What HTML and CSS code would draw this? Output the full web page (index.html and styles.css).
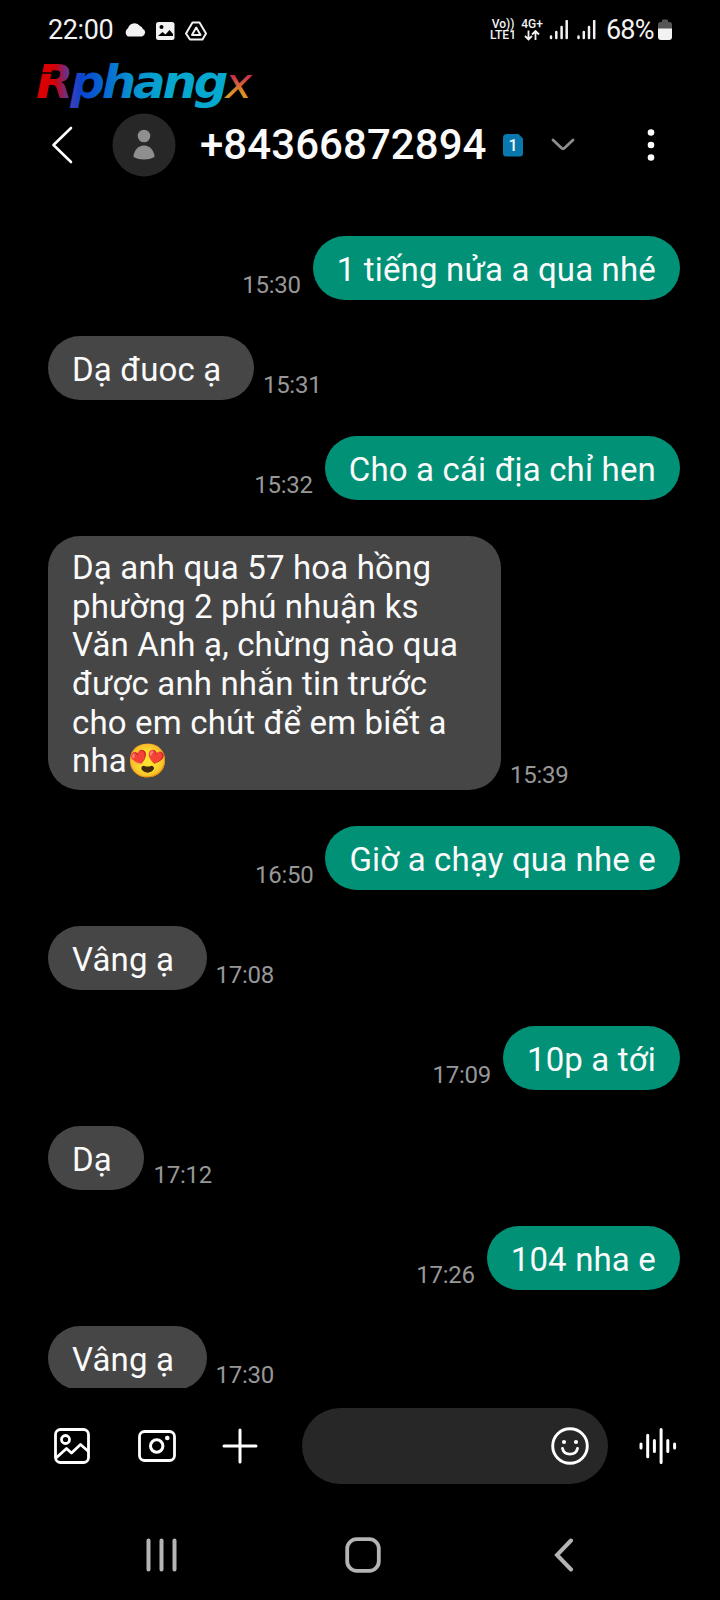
FILE: index.html
```html
<!DOCTYPE html>
<html lang="vi">
<head>
<meta charset="utf-8">
<title>+84366872894</title>
<link rel="stylesheet" href="styles.css">
</head>
<body>
<div class="phone">
  <div class="status">
    <span class="clock">22:00</span>
    <svg class="status-left" width="86" height="24" viewBox="0 0 86 24">
      <path fill="#f2f2f2" d="M5 18.500a4.800 4.800 0 0 1 0-8.200 6.800 6.800 0 0 1 12-2.300 4.500 4.500 0 0 1 2.800 2.700 4.200 4.200 0 0 1-.8 7.800z"/>
      <rect x="33" y="4" width="18.500" height="18" rx="2.500" fill="#f2f2f2"/>
      <circle cx="38.500" cy="9" r="2" fill="#000"/>
      <path d="M35 18l4.500-4 3 2.500 4-4.500 3.500 4v2H35z" fill="#000"/>
      <path d="M69.500 4.500h7l6.500 11-3.500 6H67l-4-6z" fill="none" stroke="#f2f2f2" stroke-width="2" stroke-linejoin="round"/>
      <path d="M73.200 9.500l4.300 7.500H69z" fill="none" stroke="#f2f2f2" stroke-width="2" stroke-linejoin="round"/>
    </svg>
    <div class="tiny volte"><span>Vo))</span><span>LTE1</span></div>
    <div class="tiny net"><span>4G+</span>
      <svg width="16" height="11" viewBox="0 0 16 11"><path d="M4.500 .5v9M1 6l3.500 3.500L8 6M11.500 10V1M8 4.500L11.500 1 15 4.500" fill="none" stroke="#f2f2f2" stroke-width="1.800"/></svg>
    </div>
    <svg class="signal" width="48" height="20" viewBox="0 0 48 20"><path d="M2 16.500V18M7.300 12V18M12.600 7V18M17.700 1V18M29.500 16.500V18M34.800 12V18M40 7V18M45.200 1V18" stroke="#f2f2f2" stroke-width="2.500" stroke-linecap="round"/></svg>
    <span class="percent">68%</span>
    <svg class="battery" width="14" height="22" viewBox="0 0 14 22"><path d="M4 1.500Q4 .5 5 .5h4q1 0 1 1V3h1.500Q14 3 14 5.500V10H0V5.500Q0 3 2.500 3H4z" fill="#555"/><path d="M0 9.500h14V18q0 3-3 3H3q-3 0-3-3z" fill="#f2f2f2"/></svg>
  </div>

  <svg class="logo" width="220" height="50" viewBox="0 0 220 50">
    <defs>
      <linearGradient id="brand" gradientUnits="userSpaceOnUse" x1="0" y1="0" x2="190" y2="0">
        <stop offset="0" stop-color="#e00000"/><stop offset=".1" stop-color="#d20008"/><stop offset=".18" stop-color="#493db0"/><stop offset=".24" stop-color="#0846d0"/><stop offset=".5" stop-color="#0790cf"/><stop offset=".7" stop-color="#06a8cf"/><stop offset="1" stop-color="#06a8cf"/>
      </linearGradient>
      <linearGradient id="warm" gradientUnits="userSpaceOnUse" x1="0" y1="12" x2="0" y2="38"><stop offset=".1" stop-color="#c62852"/><stop offset=".8" stop-color="#dc9424"/></linearGradient>
    </defs>
    <text class="logo-text" x="0" y="38" textLength="213" lengthAdjust="spacingAndGlyphs" fill="url(#brand)">Rphang<tspan class="logo-x" fill="url(#warm)">x</tspan></text>
    <path d="M4 13h13" stroke="#000" stroke-width="1.500"/>
  </svg>

  <header class="header">
    <svg class="back" width="22" height="38" viewBox="0 0 22 38"><path d="M20 2L2.500 19 20 36" fill="none" stroke="#fff" stroke-width="2.600" stroke-linecap="round" stroke-linejoin="round"/></svg>
    <svg class="avatar" width="64" height="64" viewBox="0 0 64 64"><circle cx="32" cy="32" r="31.500" fill="#272727"/><circle cx="32" cy="23" r="6.300" fill="#8f8f8f"/><path d="M21.500 44c0-6 4.500-11.500 10.500-11.500S42.500 38 42.500 44q-4.500 2.500-10.500 2.500T21.500 44z" fill="#8f8f8f"/></svg>
    <h1 class="number">+84366872894</h1>
    <span class="sim">1</span>
    <svg class="chevron" width="26" height="16" viewBox="0 0 26 16"><path d="M3 3l8.500 8q1.500 1.400 3 0L23 3" fill="none" stroke="#8d8d8d" stroke-width="2.800" stroke-linecap="round" stroke-linejoin="round"/></svg>
    <svg class="more" width="8" height="34" viewBox="0 0 8 34"><g fill="#fff"><circle cx="4" cy="4.500" r="3.300"/><circle cx="4" cy="17" r="3.300"/><circle cx="4" cy="29.500" r="3.300"/></g></svg>
  </header>

  <main class="thread">
    <div class="row sent"><p class="bubble">1 tiếng nửa a qua nhé</p><time>15:30</time></div>
    <div class="row"><p class="bubble">Dạ đuoc ạ</p><time>15:31</time></div>
    <div class="row sent"><p class="bubble">Cho a cái địa chỉ hen</p><time>15:32</time></div>
    <div class="row"><p class="bubble long">Dạ anh qua 57 hoa hồng<br>phường 2 phú nhuận ks<br>Văn Anh ạ, chừng nào qua<br>được anh nhắn tin trước<br>cho em chút để em biết a<br>nha<span class="emoji">😍</span></p><time>15:39</time></div>
    <div class="row sent"><p class="bubble">Giờ a chạy qua nhe e</p><time>16:50</time></div>
    <div class="row"><p class="bubble">Vâng ạ</p><time>17:08</time></div>
    <div class="row sent"><p class="bubble">10p a tới</p><time>17:09</time></div>
    <div class="row"><p class="bubble">Dạ</p><time>17:12</time></div>
    <div class="row sent"><p class="bubble">104 nha e</p><time>17:26</time></div>
    <div class="row"><p class="bubble">Vâng ạ</p><time>17:30</time></div>
  </main>

  <div class="composer">
    <svg class="gallery" width="36" height="36" viewBox="0 0 36 36"><g fill="none" stroke="#fff" stroke-width="2.800" stroke-linejoin="round"><rect x="1.500" y="1.500" width="33" height="33" rx="5"/><circle cx="11.500" cy="11.500" r="4"/><path d="M2 30l10.500-9.500 5 4.500 9-8.500 8 7"/></g></svg>
    <svg class="camera" width="38" height="32" viewBox="0 0 38 32"><g fill="none" stroke="#fff"><rect x="1.500" y="1.500" width="35" height="29" rx="5" stroke-width="2.800"/><circle cx="18.700" cy="16" r="6.200" stroke-width="3"/></g><circle cx="29.300" cy="8" r="2.300" fill="#fff"/></svg>
    <svg class="plus" width="36" height="36" viewBox="0 0 36 36"><path d="M18 2v32M2 18h32" stroke="#fff" stroke-width="3" stroke-linecap="round"/></svg>
    <div class="field">
      <svg width="38" height="38" viewBox="0 0 38 38"><g fill="none" stroke="#fff" stroke-width="2.900" stroke-linecap="round"><circle cx="19" cy="19" r="17.300"/><path d="M11.500 21.500c1.800 7.500 13.200 7.500 15 0"/></g><circle cx="13" cy="15" r="2.100" fill="#fff"/><circle cx="25" cy="15" r="2.100" fill="#fff"/></svg>
    </div>
    <svg class="voice" width="38" height="38" viewBox="0 0 38 38"><path d="M2 17v4M8.700 8.200v21.600M15.400 13.500v11M22.100 2.500v33M28.800 13.500v11M35.600 17v4" stroke="#fff" stroke-width="3" stroke-linecap="round"/></svg>
  </div>

  <nav class="navbar">
    <svg class="recents" width="32" height="34" viewBox="0 0 32 34"><path d="M2.500 2.500v29M15.500 2.500v29M28.500 2.500v29" stroke="#b4b4b4" stroke-width="4" stroke-linecap="round"/></svg>
    <svg class="home" width="36" height="36" viewBox="0 0 36 36"><rect x="2.200" y="2.200" width="31.600" height="31.600" rx="9.500" fill="none" stroke="#b4b4b4" stroke-width="3.800"/></svg>
    <svg class="nav-back" width="20" height="34" viewBox="0 0 20 34"><path d="M17 2.500L3 17l14 14.500" fill="none" stroke="#b4b4b4" stroke-width="4" stroke-linecap="round"/></svg>
  </nav>
</div>
</body>
</html>
```

FILE: styles.css
```css
* { box-sizing: border-box; }
body { margin: 0; background: #000; color: #fafafa; font-family: Roboto, "Noto Sans", sans-serif; }
svg { display: block; flex: none; }
.phone { width: 720px; height: 1600px; display: flex; flex-direction: column; overflow: hidden; background: #000; }

.status { height: 60px; padding: 0 48px 0 48px; display: flex; align-items: center; flex: none; color: #f2f2f2; }
.clock, .percent { font-size: 27px; line-height: 32px; letter-spacing: -0.4px; }
.status-left { margin-left: 10px; }
.tiny { display: flex; flex-direction: column; align-items: center; font-size: 12px; font-weight: 500; line-height: 11px; }
.volte { margin-left: auto; width: 26px; }
.net { width: 24px; margin-left: 4px; }
.signal { margin-left: 5px; }
.percent { margin-left: 9px; width: 50px; white-space: nowrap; letter-spacing: -0.8px; }
.battery { margin-left: 2px; }

.logo { margin-left: 36px; overflow: visible; }
.logo-text { font-family: "DejaVu Sans", sans-serif; font-weight: 700; font-style: oblique; font-size: 46px; letter-spacing: -3px; }
.logo-x { font-size: 43px; font-weight: 400; }

.header { height: 70px; flex: none; display: flex; align-items: center; padding-left: 51px; }
.avatar { margin-left: 39px; }
.number { margin: 0 0 0 24px; width: 288px; font-size: 42px; font-weight: 500; line-height: 50px; letter-spacing: 0.05px; white-space: nowrap; }
.sim { margin-left: 15px; width: 20px; height: 23px; background: #0878ae; border-radius: 4px; clip-path: polygon(0 0, 75% 0, 100% 22%, 100% 100%, 0 100%); font-size: 16px; font-weight: 500; line-height: 23px; text-align: center; }
.chevron { margin-left: 27px; }
.more { margin-left: 71px; }

.thread { height: 1208px; padding: 56px 40px 0 48px; display: flex; flex-direction: column; gap: 36px; overflow: hidden; flex: none; }
.row { display: flex; align-items: flex-end; gap: 9px; flex: none; }
.sent { flex-direction: row-reverse; gap: 12px; }
.bubble { margin: 0; height: 64px; padding: 14.5px 32.5px 0 24px; border-radius: 32px; background: #464646; font-size: 33px; line-height: 38.67px; letter-spacing: 0.16px; white-space: nowrap; }
.sent .bubble { background: #019177; padding-right: 24px; }
.bubble.long { width: 453px; height: 254px; padding-top: 13px; }
.emoji { line-height: 1; }
time { font-size: 24px; line-height: 28px; letter-spacing: -0.25px; color: #979797; margin-bottom: 1px; }

.composer { height: 116px; flex: none; display: flex; align-items: center; padding-left: 54px; }
.camera { margin-left: 48px; }
.plus { margin-left: 46px; }
.field { margin-left: 44px; width: 306px; height: 76px; border-radius: 38px; background: #272727; display: flex; align-items: center; justify-content: flex-end; padding-right: 19px; }
.voice { margin-left: 31px; }

.navbar { flex: 1; display: flex; align-items: center; padding: 6px 0 0 146px; }
.home { margin-left: 167px; }
.nav-back { margin-left: 173px; }
```
